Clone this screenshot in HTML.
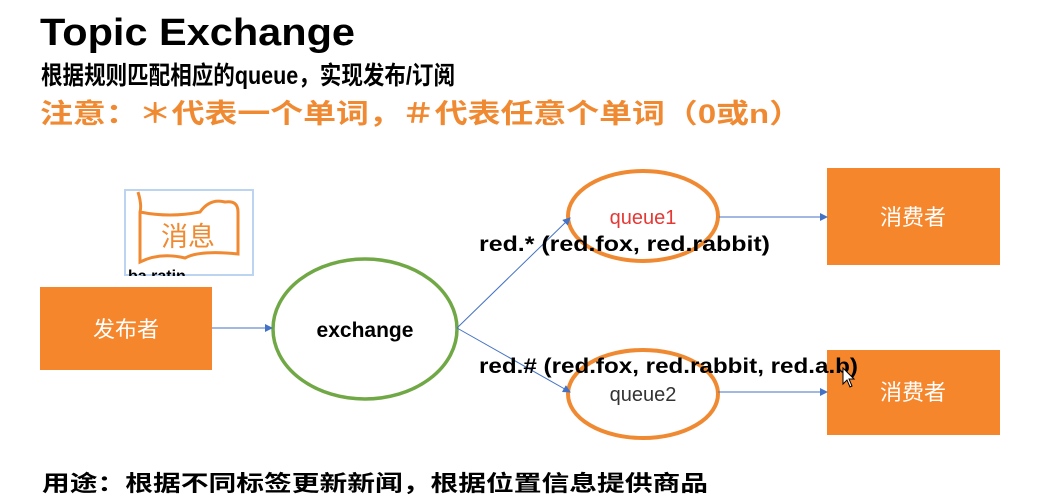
<!DOCTYPE html>
<html><head><meta charset="utf-8"><style>
html,body{margin:0;padding:0;background:#fff;}
svg{display:block;font-family:"Liberation Sans","Noto Sans CJK SC",sans-serif;}
</style></head><body>
<svg width="1045" height="501" viewBox="0 0 1045 501">
<defs><marker id="a" markerWidth="8" markerHeight="8" refX="7" refY="4" orient="auto" markerUnits="userSpaceOnUse"><path d="M0,0 L8,4 L0,8 Z" fill="#4472C4"/></marker></defs>
<text x="40" y="45" font-size="38" font-weight="bold" font-family="Liberation Sans,sans-serif" textLength="315" lengthAdjust="spacingAndGlyphs">Topic Exchange</text>
<text x="41" y="84" font-size="25" font-weight="bold" textLength="414" lengthAdjust="spacingAndGlyphs">根据规则匹配相应的queue，实现发布/订阅</text>
<text x="40" y="123" font-size="27" font-weight="bold" fill="#F08A32" textLength="762" lengthAdjust="spacingAndGlyphs">注意：＊代表一个单词，＃代表任意个单词（0或n）</text>
<rect x="125" y="190" width="128" height="85" fill="#fff" stroke="#BCD4F0" stroke-width="2"/>
<path d="M138,192 Q142,205 140,212 L140,262 Q160,252 185,258 Q200,250 238,254 L238,212 Q238,200 225,202 Q210,198 200,212 Q170,218 140,212" fill="none" stroke="#F08A32" stroke-width="3"/>
<text x="188" y="246" font-size="27" fill="#F08A32" text-anchor="middle">消息</text>
<text x="128" y="281" font-size="16" font-weight="bold">ba ratin</text>
<rect x="120" y="276" width="145" height="10" fill="#fff"/>
<rect x="40" y="287" width="172" height="83" fill="#F5862B"/>
<text x="126" y="337" font-size="22" fill="#fff" text-anchor="middle">发布者</text>
<rect x="827" y="168" width="173" height="97" fill="#F5862B"/>
<text x="913" y="225" font-size="22" fill="#fff" text-anchor="middle">消费者</text>
<rect x="827" y="350" width="173" height="85" fill="#F5862B"/>
<text x="913" y="400" font-size="22" fill="#fff" text-anchor="middle">消费者</text>
<ellipse cx="365" cy="329" rx="92" ry="70" fill="none" stroke="#70A845" stroke-width="3.5"/>
<text x="365" y="337" font-size="21" font-weight="bold" text-anchor="middle">exchange</text>
<ellipse cx="643" cy="216" rx="75" ry="45" fill="none" stroke="#F08A32" stroke-width="4"/>
<text x="643" y="224" font-size="20" fill="#E53935" text-anchor="middle">queue1</text>
<ellipse cx="643" cy="394" rx="75" ry="44" fill="none" stroke="#F08A32" stroke-width="4"/>
<text x="643" y="401" font-size="20" fill="#333" text-anchor="middle">queue2</text>
<g stroke="#4472C4" stroke-width="1" fill="none" marker-end="url(#a)">
<line x1="212" y1="328" x2="272" y2="328"/>
<line x1="457" y1="328" x2="570" y2="218"/>
<line x1="457" y1="328" x2="570" y2="392"/>
<line x1="719" y1="217" x2="827" y2="217"/>
<line x1="718" y1="392" x2="827" y2="392"/>
</g>
<text x="479" y="251" font-size="21" font-weight="bold" textLength="291" lengthAdjust="spacingAndGlyphs">red.*  (red.fox, red.rabbit)</text>
<text x="479" y="373" font-size="21" font-weight="bold" textLength="379" lengthAdjust="spacingAndGlyphs">red.# (red.fox, red.rabbit, red.a.b)</text>
<path d="M843,368 L843,384 L847,380 L850,387 L852,386 L849,379 L854,379 Z" fill="#fff" stroke="#000" stroke-width="1"/>
<text x="42" y="491" font-size="22" font-weight="bold" textLength="666" lengthAdjust="spacingAndGlyphs">用途：根据不同标签更新新闻，根据位置信息提供商品</text>
</svg>
</body></html>
